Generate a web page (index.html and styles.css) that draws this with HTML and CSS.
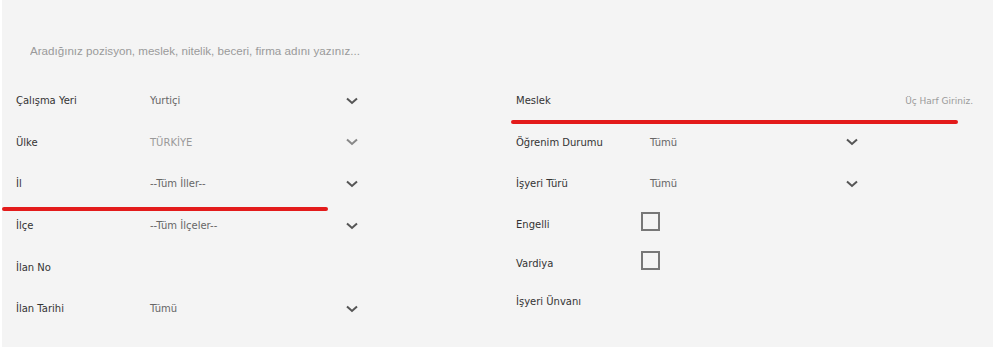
FILE: index.html
```html
<!DOCTYPE html>
<html lang="tr">
<head>
    <meta charset="UTF-8">
    <title>İlan Ara</title>
    <link rel="stylesheet" href="styles.css">
</head>
<body>
    <div class="page">
        <div class="search">
            <input type="text" class="search-input" placeholder="Aradığınız pozisyon, meslek, nitelik, beceri, firma adını yazınız...">
        </div>

        <div class="filters">
            <!-- Left column -->
            <div class="col">
                <div class="row">
                    <span class="label">Çalışma Yeri</span>
                    <div class="select"><span class="value">Yurtiçi</span><svg class="chev" viewBox="0 0 12 8"><path d="M1 1.5l5 4.5 5-4.5"></path></svg></div>
                </div>
                <div class="row">
                    <span class="label">Ülke</span>
                    <div class="select disabled"><span class="value">TÜRKİYE</span><svg class="chev" viewBox="0 0 12 8"><path d="M1 1.5l5 4.5 5-4.5"></path></svg></div>
                </div>
                <div class="row">
                    <span class="label">İl</span>
                    <div class="select"><span class="value">--Tüm İller--</span><svg class="chev" viewBox="0 0 12 8"><path d="M1 1.5l5 4.5 5-4.5"></path></svg></div>
                    <div class="mark mark-il"></div>
                </div>
                <div class="row">
                    <span class="label">İlçe</span>
                    <div class="select"><span class="value">--Tüm İlçeler--</span><svg class="chev" viewBox="0 0 12 8"><path d="M1 1.5l5 4.5 5-4.5"></path></svg></div>
                </div>
                <div class="row">
                    <span class="label">İlan No</span>
                </div>
                <div class="row">
                    <span class="label">İlan Tarihi</span>
                    <div class="select"><span class="value">Tümü</span><svg class="chev" viewBox="0 0 12 8"><path d="M1 1.5l5 4.5 5-4.5"></path></svg></div>
                </div>
            </div>

            <!-- Right column -->
            <div class="col">
                <div class="row">
                    <span class="label">Meslek</span>
                    <div class="text-field"><span class="hint">Üç Harf Giriniz.</span></div>
                    <div class="mark mark-meslek"></div>
                </div>
                <div class="row">
                    <span class="label">Öğrenim Durumu</span>
                    <div class="select"><span class="value">Tümü</span><svg class="chev" viewBox="0 0 12 8"><path d="M1 1.5l5 4.5 5-4.5"></path></svg></div>
                </div>
                <div class="row">
                    <span class="label">İşyeri Türü</span>
                    <div class="select"><span class="value">Tümü</span><svg class="chev" viewBox="0 0 12 8"><path d="M1 1.5l5 4.5 5-4.5"></path></svg></div>
                </div>
                <div class="row row-check">
                    <span class="label label-check">Engelli</span>
                    <span class="checkbox"></span>
                </div>
                <div class="row row-short">
                    <span class="label label-check">Vardiya</span>
                    <span class="checkbox"></span>
                </div>
                <div class="row row-short">
                    <span class="label">İşyeri Ünvanı</span>
                </div>
            </div>
        </div>
    </div>
</body>
</html>
```

FILE: styles.css
```css
* {
    margin: 0;
    padding: 0;
    box-sizing: border-box;
}

body {
    background-color: #ffffff;
    font-family: "DejaVu Sans", Verdana, sans-serif;
    font-size: 10px;
    color: #333;
}

.page {
    margin-left: 2px;
    height: 347px;
    background-color: #f4f4f4;
}

.search {
    padding: 38px 0 0 26px;
    height: 80px;
}

.search-input {
    width: 600px;
    height: 24px;
    border: none;
    background: transparent;
    padding-left: 2px;
    font-family: "Liberation Sans", Arial, sans-serif;
    font-size: 11.6px;
    color: #333;
    outline: none;
}

.search-input::placeholder {
    color: #9a9a9a;
}

.filters {
    display: grid;
    grid-template-columns: 500px 1fr;
}

.col {
    padding-left: 14px;
}

.row {
    position: relative;
    display: flex;
    align-items: center;
    height: 41.6px;
}

.row-check {
    height: 40px;
}

.row-short {
    height: 38px;
}

.label {
    width: 134px;
    flex-shrink: 0;
    font-size: 10px;
    color: #333;
}

.label-check {
    width: 125px;
}

.select {
    display: flex;
    align-items: center;
    justify-content: space-between;
    width: 210px;
}

.value {
    font-size: 10px;
    color: #666;
}

.select.disabled .value {
    color: #999;
}

.chev {
    width: 12px;
    height: 8px;
    margin-right: 2px;
}

.chev path {
    fill: none;
    stroke: #555;
    stroke-width: 2;
}

.select.disabled .chev path {
    stroke: #888;
}

.text-field {
    width: 325px;
    text-align: right;
    padding-right: 2px;
}

.hint {
    font-size: 9px;
    color: #9a9a9a;
}

.checkbox {
    width: 19px;
    height: 19px;
    margin-bottom: 6px;
    border: 2px solid #777;
}

.mark {
    position: absolute;
    height: 4px;
    border-radius: 2px;
    background-color: #e31b1b;
}

.mark-il {
    left: -14px;
    width: 326px;
    bottom: -6px;
}

.mark-meslek {
    left: -5px;
    width: 447px;
    bottom: -2px;
}
```
